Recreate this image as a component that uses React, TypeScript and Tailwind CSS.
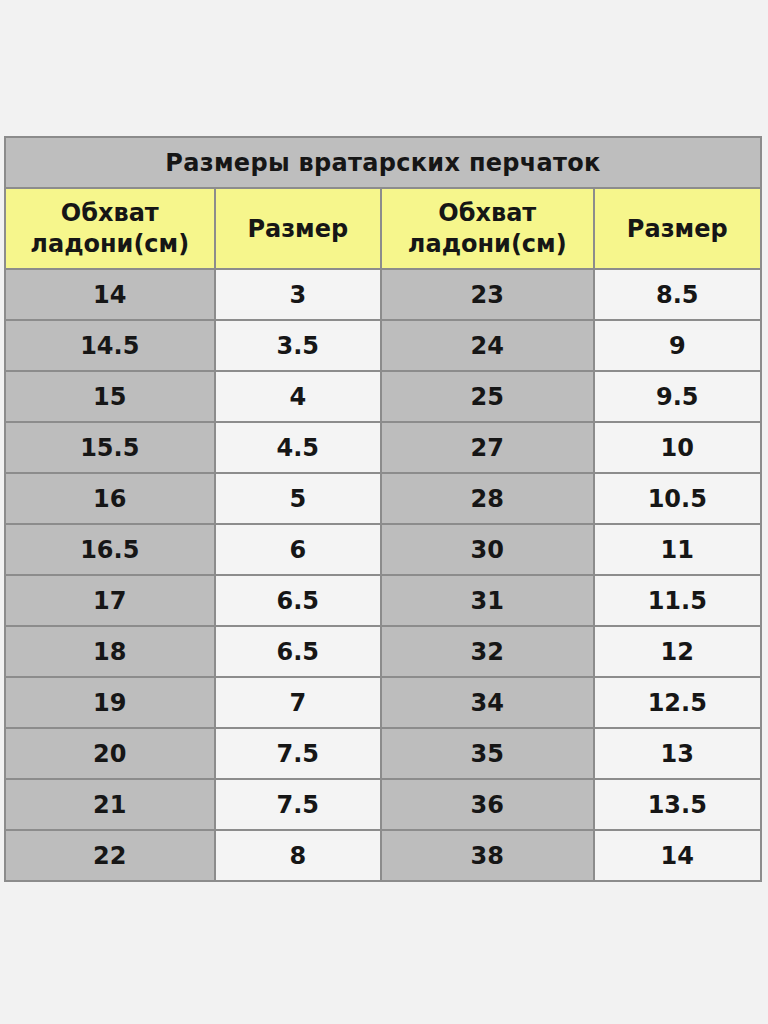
const rows: [string, string, string, string][] = [
  ['14', '3', '23', '8.5'],
  ['14.5', '3.5', '24', '9'],
  ['15', '4', '25', '9.5'],
  ['15.5', '4.5', '27', '10'],
  ['16', '5', '28', '10.5'],
  ['16.5', '6', '30', '11'],
  ['17', '6.5', '31', '11.5'],
  ['18', '6.5', '32', '12'],
  ['19', '7', '34', '12.5'],
  ['20', '7.5', '35', '13'],
  ['21', '7.5', '36', '13.5'],
  ['22', '8', '38', '14'],
];

const cell = 'border-2 border-[#8c8c8c] text-center align-middle';

const Girth = () => (
  <th className={`${cell} font-bold leading-[31px]`}>
    Обхват
    <br />
    ладони(см)
  </th>
);

const Size = () => <th className={`${cell} font-bold`}>Размер</th>;

export default function App() {
  return (
    <div
      className="min-h-screen bg-[#f2f2f2] pt-[136px] px-[4px] text-[#161616] font-bold text-[24px]"
      style={{ fontFamily: '"DejaVu Sans", Verdana, sans-serif' }}
    >
      <table className="w-[758px] border-collapse border-2 border-[#8c8c8c]">
        <colgroup>
          <col className="w-[210px]" />
          <col className="w-[167px]" />
          <col className="w-[213px]" />
          <col className="w-[168px]" />
        </colgroup>
        <thead>
          <tr className="h-[51px] bg-[#bebebe]">
            <th colSpan={4} className="border-2 border-[#8c8c8c] text-center tracking-[0.3px] font-bold">
              Размеры вратарских перчаток
            </th>
          </tr>
          <tr className="h-[81px] bg-[#f6f68c]">
            <Girth />
            <Size />
            <Girth />
            <Size />
          </tr>
        </thead>
        <tbody>
          {rows.map((r, i) => (
            <tr key={i} className="h-[51px]">
              <td className={`${cell} bg-[#bdbdbd]`}>{r[0]}</td>
              <td className={`${cell} bg-[#f4f4f4]`}>{r[1]}</td>
              <td className={`${cell} bg-[#bdbdbd]`}>{r[2]}</td>
              <td className={`${cell} bg-[#f4f4f4]`}>{r[3]}</td>
            </tr>
          ))}
        </tbody>
      </table>
    </div>
  );
}
